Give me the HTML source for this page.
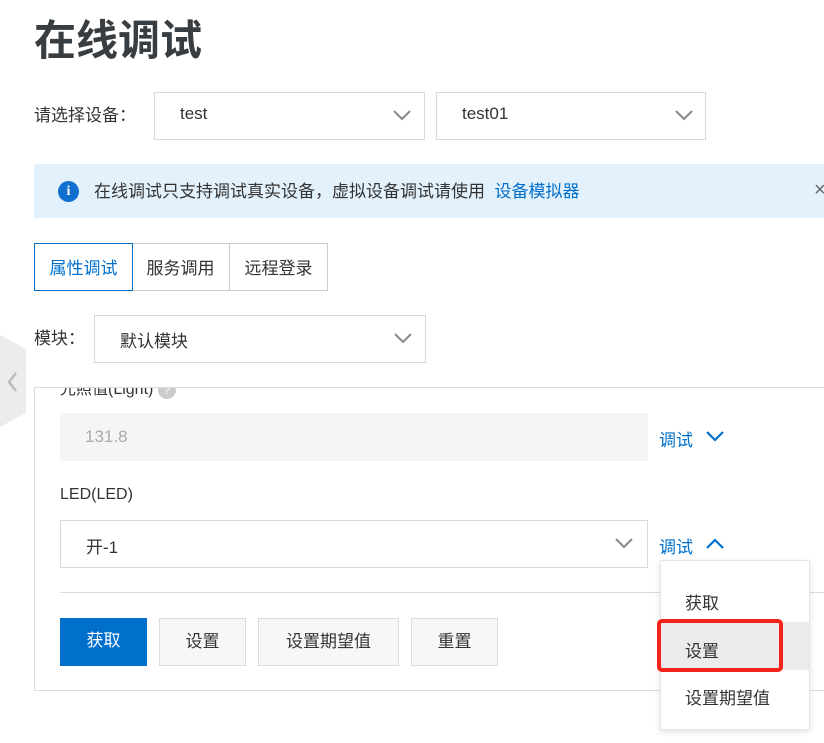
<!DOCTYPE html>
<html><head><meta charset="utf-8"><style>
*{box-sizing:border-box;margin:0;padding:0}
body{width:824px;height:743px;overflow:hidden;background:#fff;position:relative;font-family:"Liberation Sans","Noto Sans CJK SC",sans-serif;color:#333;font-size:16px}
.a{position:absolute}
.sel{position:absolute;border:1px solid #d9d9d9;background:#fff}
.cv{position:absolute}
.btn{position:absolute;top:618px;height:48px;border:1px solid #dcdcdc;background:#f7f7f7;text-align:center;line-height:46px;font-size:17px;color:#333}
.tab{position:absolute;top:243px;height:48px;border:1px solid #ccc;line-height:50px;text-align:center;font-size:17px}
</style></head><body>
<div class="a" style="left:34px;top:13px;font-size:42px;font-weight:bold;color:#373d41;line-height:56px">在线调试</div>
<div class="a" style="left:34px;top:104px;font-size:17px;line-height:24px">请选择设备：</div>
<div class="sel" style="left:154px;top:92px;width:271px;height:48px"><span class="a" style="left:25px;top:11px;font-size:17px">test</span><svg class="cv" style="left:238px;top:17px" width="18" height="11"><polyline points="1,1 9,9 17,1" fill="none" stroke="#888" stroke-width="2"/></svg></div>
<div class="sel" style="left:436px;top:92px;width:270px;height:48px"><span class="a" style="left:25px;top:11px;font-size:17px">test01</span><svg class="cv" style="left:238px;top:17px" width="18" height="11"><polyline points="1,1 9,9 17,1" fill="none" stroke="#888" stroke-width="2"/></svg></div>
<div class="a" style="left:34px;top:164px;width:790px;height:54px;background:#e3f1fc"></div>
<div class="a" style="left:58px;top:181px;width:21px;height:21px;border-radius:50%;background:#1170cf;color:#fff;font-weight:bold;font-size:14px;text-align:center;line-height:21px;font-family:'Liberation Serif',serif">i</div>
<div class="a" style="left:94px;top:180px;font-size:17px;line-height:24px;color:#333">在线调试只支持调试真实设备，虚拟设备调试请使用 <span style="color:#0070cc">&nbsp;设备模拟器</span></div>
<div class="a" style="left:814px;top:179px;font-size:20px;color:#666">×</div>
<div class="tab" style="left:131px;width:99px;color:#333">服务调用</div>
<div class="tab" style="left:229px;width:99px;color:#333">远程登录</div>
<div class="tab" style="left:34px;width:99px;border-color:#0070cc;color:#0070cc;background:#fff">属性调试</div>
<div class="a" style="left:34px;top:327px;font-size:17px;line-height:24px">模块：</div>
<div class="sel" style="left:94px;top:315px;width:332px;height:48px"><span class="a" style="left:25px;top:11px;font-size:17px">默认模块</span><svg class="cv" style="left:299px;top:17px" width="18" height="11"><polyline points="1,1 9,9 17,1" fill="none" stroke="#888" stroke-width="2"/></svg></div>
<svg class="a" style="left:0;top:335px" width="26" height="92"><polygon points="0,0 26,14 26,78 0,92" fill="#ececec"/><polyline points="16,38 9,47 16,56" fill="none" stroke="#bbb" stroke-width="2.5"/></svg>
<div class="a" style="left:34px;top:387px;width:800px;height:304px;border:1px solid #dcdcdc;overflow:hidden">
 <div class="a" style="left:25px;top:-13px;font-size:16px;color:#333">光照值(Light) <span style="display:inline-block;width:18px;height:18px;border-radius:50%;background:#ccc;color:#fff;font-size:12px;text-align:center;line-height:18px;vertical-align:middle">?</span></div>
 <div class="a" style="left:25px;top:25px;width:588px;height:48px;background:#f5f5f5;color:#aaa;font-size:17px;line-height:48px;padding-left:25px">131.8</div>
 <div class="a" style="left:25px;top:98px;font-size:16px">LED(LED)</div>
 <div class="sel" style="left:25px;top:132px;width:588px;height:48px"><span class="a" style="left:25px;top:12px;font-size:17px">开-1</span><svg class="cv" style="left:554px;top:17px" width="18" height="11"><polyline points="1,1 9,9 17,1" fill="none" stroke="#888" stroke-width="2"/></svg></div>
 <div class="a" style="left:25px;top:204px;width:800px;height:1px;background:#dcdcdc"></div>
</div>
<div class="a" style="left:659px;top:426px;font-size:17px;color:#0070cc">调试</div>
<svg class="cv" style="left:706px;top:431px" width="18" height="11"><polyline points="1,1 9,9 17,1" fill="none" stroke="#0070cc" stroke-width="2.2"/></svg>
<div class="a" style="left:659px;top:533px;font-size:17px;color:#0070cc">调试</div>
<svg class="cv" style="left:706px;top:538px" width="18" height="11"><polyline points="1,10 9,2 17,10" fill="none" stroke="#0070cc" stroke-width="2.2"/></svg>
<div class="a" style="left:60px;top:618px;width:87px;height:48px;background:#0070cc;color:#fff;text-align:center;line-height:46px;font-size:17px">获取</div>
<div class="btn" style="left:159px;width:87px">设置</div>
<div class="btn" style="left:258px;width:141px">设置期望值</div>
<div class="btn" style="left:411px;width:87px">重置</div>
<div class="a" style="left:660px;top:560px;width:150px;height:170px;background:#fff;border:1px solid #e6e6e6;box-shadow:0 2px 6px rgba(0,0,0,.12)">
 <div class="a" style="left:24px;top:28px;font-size:17px">获取</div>
 <div class="a" style="left:0;top:61px;width:148px;height:48px;background:#ebebeb"></div>
 <div class="a" style="left:24px;top:76px;font-size:17px">设置</div>
 <div class="a" style="left:24px;top:123px;font-size:17px">设置期望值</div>
</div>
<div class="a" style="left:657px;top:619px;width:126px;height:53px;border:4px solid #f5221b;border-radius:5px"></div>
</body></html>
